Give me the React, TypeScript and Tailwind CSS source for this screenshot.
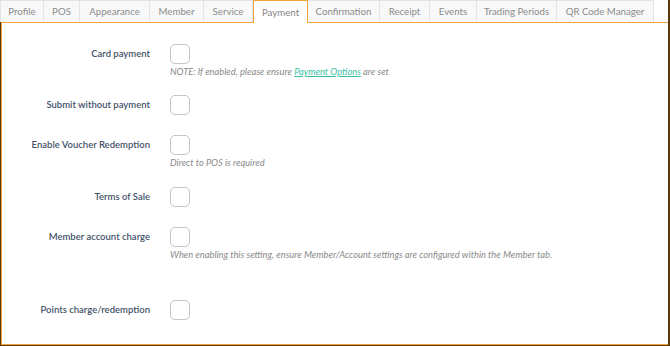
import React from "react";

const tabs: { name: string; w: string; active?: boolean }[] = [
  { name: "Profile", w: "w-[44px]" },
  { name: "POS", w: "w-[36px]" },
  { name: "Appearance", w: "w-[70px]" },
  { name: "Member", w: "w-[54px]" },
  { name: "Service", w: "w-[49px]" },
  { name: "Payment", w: "w-[55px]", active: true },
  { name: "Confirmation", w: "w-[72px]" },
  { name: "Receipt", w: "w-[50px]" },
  { name: "Events", w: "w-[47px]" },
  { name: "Trading Periods", w: "w-[80px]" },
  { name: "QR Code Manager", w: "w-[97px]" },
];

function Box() {
  return <div className="w-[20px] h-[20px] rounded-[5px] border border-[#c4c4c4] bg-white" />;
}

function Row({
  label,
  children,
  className,
}: {
  label: string;
  children?: React.ReactNode;
  className: string;
}) {
  return (
    <div className={"flex " + className}>
      <div className="w-[148px] shrink-0 h-[20px] flex items-center justify-end text-[9.5px] font-semibold text-[#44536a]">
        {label}
      </div>
      <div className="pl-[20px] flex flex-col">
        <Box />
        {children}
      </div>
    </div>
  );
}

function Note({ children }: { children: React.ReactNode }) {
  return (
    <div className="mt-[2px] h-[12px] text-[9.3px] leading-[12px] italic text-[#8a8a8a] whitespace-nowrap">
      {children}
    </div>
  );
}

export default function App() {
  return (
    <div
      className="w-[670px] h-[346px] bg-white flex flex-col border-r-2 border-[#5a3708]"
      style={{ fontFamily: "Lato, 'Open Sans', sans-serif" }}
    >
      <div className="flex h-[22px] shrink-0">
        {tabs.map((t) =>
          t.active ? (
            <div
              key={t.name}
              className={
                t.w +
                " h-[23px] -mb-[1px] relative z-10 flex items-center justify-center border border-b-0 border-[#f2a33a] bg-white text-[9.7px] text-[#858585]"
              }
            >
              {t.name}
            </div>
          ) : (
            <div
              key={t.name}
              className={
                t.w +
                " h-[22px] flex items-center justify-center border-t border-r border-[#e4e4e4] first:border-l bg-[#f8f8f8] text-[9.7px] text-[#8c8c8c]"
              }
            >
              {t.name}
            </div>
          )
        )}
        <div className="flex-1" />
      </div>
      <div className="flex-1 border-l border-b border-[#5a3708]">
        <div className="h-full border border-r-0 border-[#f2a33a] pt-[21px]">
          <Row label="Card payment" className="mb-[17px]">
            <Note>
              NOTE: If enabled, please ensure{" "}
              <span className="text-[#3cbf9f] underline">Payment Options</span> are set
            </Note>
          </Row>
          <Row label="Submit without payment" className="mb-[20px]" />
          <Row label="Enable Voucher Redemption" className="mb-[18px]">
            <Note>Direct to POS is required</Note>
          </Row>
          <Row label="Terms of Sale" className="mb-[20px]" />
          <Row label="Member account charge" className="mb-[39px]">
            <Note>
              When enabling this setting, ensure Member/Account settings are configured within the
              Member tab.
            </Note>
          </Row>
          <Row label="Points charge/redemption" className="" />
        </div>
      </div>
    </div>
  );
}
